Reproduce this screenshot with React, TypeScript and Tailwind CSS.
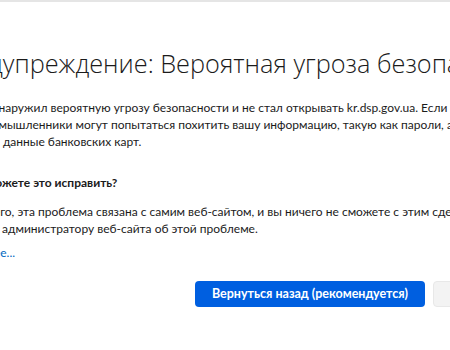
export default function App() {
  const body = { fontFamily: 'Lato, "Open Sans", sans-serif' };
  const head = { fontFamily: '"Open Sans", sans-serif' };
  return (
    <div
      className="w-[450px] h-[350px] overflow-hidden bg-white border-t-2 border-[#e5e5e5] text-[#1b1b1b]"
      style={body}
    >
      <div className="whitespace-nowrap">
        <h1 className="mt-[45px] ml-[-58px] text-[25.3px] leading-[32px] font-light" style={head}>
          Предупреждение: Вероятная угроза безопасности
        </h1>

        <div className="mt-[20px] text-[12px] leading-[17px]">
          <div className="ml-[-18px]">Обнаружил вероятную угрозу безопасности и не стал открывать kr.dsp.gov.ua. Если вы посетите</div>
          <div className="ml-[-28px]">Злоумышленники могут попытаться похитить вашу информацию, такую как пароли, а также</div>
          <div className="ml-[-21px]">или данные банковских карт.</div>
        </div>

        <h2 className="mt-[24px] ml-[-55px] text-[12px] leading-[17px] font-bold">Как вы можете это исправить?</h2>

        <div className="mt-[12px] text-[12px] leading-[17px]">
          <div className="ml-[-61px]">Скорее всего, эта проблема связана с самим веб-сайтом, и вы ничего не сможете с этим сделать.</div>
          <div className="ml-[-59px]">Сообщите администратору веб-сайта об этой проблеме.</div>
        </div>

        <a href="#" className="block mt-[7px] ml-[-56px] text-[12px] leading-[17px] text-[#0067c0]">
          Подробнее...
        </a>

        <div className="mt-[20px] ml-[195px] flex gap-[8px]">
          <button className="h-[26px] w-[230px] shrink-0 rounded-[4px] bg-[#005fe0] text-white text-[12.5px] font-bold">
            Вернуться назад (рекомендуется)
          </button>
          <button className="h-[26px] w-[120px] shrink-0 rounded-[4px] bg-[#f3f3f3] border border-[#e8e8e8] text-[12.5px]">
            <span className="ml-[40px]">Продолжить</span>
          </button>
        </div>
      </div>
    </div>
  );
}
